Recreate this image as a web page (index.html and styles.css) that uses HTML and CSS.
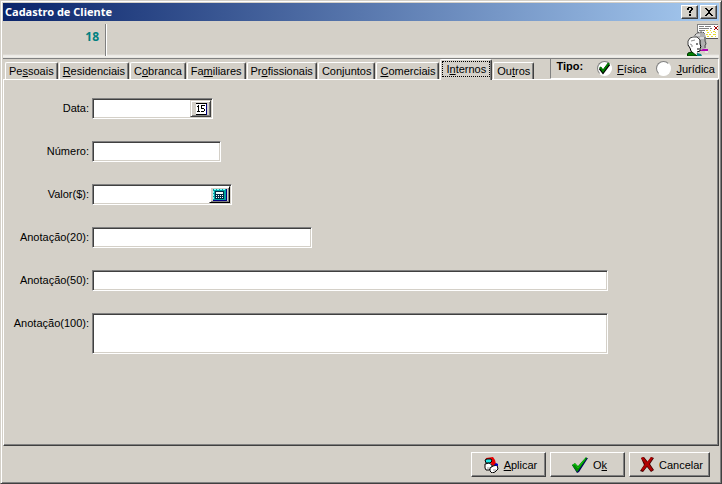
FILE: index.html
```html
<!DOCTYPE html>
<html lang="pt-BR">
<head>
    <meta charset="UTF-8">
    <title>Cadastro de Cliente</title>
    <link rel="stylesheet" href="styles.css">
</head>
<body>
    <form class="window">
        <div class="title-bar">
            <h1>Cadastro de Cliente</h1>
            <button type="button" class="title-btn" aria-label="Ajuda">
                <svg width="12" height="10" viewBox="0 0 12 10" shape-rendering="crispEdges"><path d="M3 1h1v-1h4v1h1v2h-1v1h-1v2h-2v-2h1v-1h1v-2h-2v2h-2zM5 7h2v2h-2z"/></svg>
            </button>
            <button type="button" class="title-btn" aria-label="Fechar">
                <svg width="12" height="10" viewBox="0 0 12 10" shape-rendering="crispEdges"><path d="M2 1h2v1h1v1h2v-1h1v-1h2v1h-1v1h-1v1h-1v2h1v1h1v1h1v1h-2v-1h-1v-1h-2v1h-1v1h-2v-1h1v-1h1v-1h1v-2h-1v-1h-1v-1h-1z"/></svg>
            </button>
        </div>
        <div class="header">
            <div class="code">18</div>
            <svg class="people" width="31" height="32" viewBox="0 0 31 32">
                <g shape-rendering="crispEdges">
                    <path d="M10 0h21v15h-21z" fill="#fff"/>
                    <path d="M10 0h21v1h-20v8h-1z" fill="#808080"/>
                    <path d="M19 14h12v1h-12z" fill="#555"/>
                    <path d="M12 2h5v1h-5zM18 2h6v1h-6zM12 4h10v1h-10zM23 4h2v1h-2zM12 6h6v1h-6z" fill="#808080"/>
                    <path d="M27 2h1v1h-1zM30 2h1v1h-1zM28 3h2v2h-2zM27 5h1v1h-1zM30 5h1v1h-1z" fill="#a00000"/>
                    <path d="M19 6h2v1h-2zM23 6h1v1h-1zM26 7h2v1h-2zM20 8h2v1h-2zM24 8h1v1h-1zM28 8h1v1h-1zM19 10h2v1h-2zM22 10h2v1h-2zM26 10h3v1h-3zM20 12h2v1h-2zM24 12h2v1h-2zM28 12h1v1h-1z" fill="#e8dc30"/>
                </g>
                <path d="M6 13l3-3 3-2h4l2 2 1 3v3l1 4-1 1v3l-4 2-4-4z" fill="#b0b0b0"/>
                <path d="M6 13l3-3 3-2h4l2 2" fill="none" stroke="#444" stroke-dasharray="2 1"/>
                <path d="M9 11h4M13 14h4" stroke="#fff"/>
                <path d="M18 13v4l1 3-1 1v3" fill="none" stroke="#555"/>
                <path d="M12 27l4-2h5v2z" fill="#b000b0"/>
                <path d="M18 28h3" stroke="#fff"/>
                <path d="M1 17l2-3 3-2 4 1 3 3v4l1 3-1 1v4l-3 1-4 2-2-5-3-4z" fill="#fff"/>
                <path d="M1 21v-4l2-3 3-1h4l3 3" fill="none" stroke="#444"/>
                <path d="M4 17l4-1M3 20l2 1v2" fill="none" stroke="#909090"/>
                <path d="M13 16v4l1 3-1 1v3l-3 1" fill="none" stroke="#000"/>
                <path d="M9 20h2M10 25h2" stroke="#000"/>
                <path d="M1 21l2 3 1 3 2 3" fill="none" stroke="#000"/>
                <path d="M0 32l1-3 4-1 5 4z" fill="#008000" stroke="#003000"/>
                <path d="M10 29l4 1 1 2h-5z" fill="#008080"/>
            </svg>
        </div>
        <div class="tab-row">
            <div class="tabs" role="tablist">
                <button type="button" role="tab">Pe<u>s</u>soais</button>
                <button type="button" role="tab"><u>R</u>esidenciais</button>
                <button type="button" role="tab">C<u>o</u>branca</button>
                <button type="button" role="tab">Fa<u>m</u>iliares</button>
                <button type="button" role="tab">Pr<u>o</u>fissionais</button>
                <button type="button" role="tab">Con<u>j</u>untos</button>
                <button type="button" role="tab"><u>C</u>omerciais</button>
                <button type="button" role="tab" class="active" aria-selected="true"><span>I<u>n</u>ternos</span></button>
                <button type="button" role="tab">Ou<u>t</u>ros</button>
            </div>
            <div class="type" role="radiogroup" aria-labelledby="tipo">
                <b id="tipo">Tipo:</b>
                <label>
                    <span class="radio">
                        <input type="radio" name="tipo" value="fisica" checked>
                        <svg width="15" height="15" viewBox="0 0 15 15"><path d="M3 7l3 4 6-8" fill="none" stroke="#000" stroke-width="3"/><path d="M3 6l3 4 6-8" fill="none" stroke="#008000" stroke-width="2"/></svg>
                    </span>
                    <span><u>F</u>ísica</span>
                </label>
                <label>
                    <span class="radio">
                        <input type="radio" name="tipo" value="juridica">
                        <svg width="15" height="15" viewBox="0 0 15 15"><path d="M3 7l3 4 6-8" fill="none" stroke="#000" stroke-width="3"/><path d="M3 6l3 4 6-8" fill="none" stroke="#008000" stroke-width="2"/></svg>
                    </span>
                    <span><u>J</u>urídica</span>
                </label>
            </div>
        </div>
        <div class="panel">
            <label for="data">Data:</label>
            <div class="field field-date">
                <input type="text" id="data">
                <button type="button" class="field-btn" aria-label="Abrir calendário">
                    <svg width="14" height="12" viewBox="0 0 14 12" shape-rendering="crispEdges">
                        <path d="M3 1h10v11h-10z" fill="#000080"/>
                        <path d="M2 1h10v10h-10z" fill="#fff"/>
                        <path d="M2 0h11v1h-11zM2 11h10v1h-10z" fill="#000"/>
                        <path d="M4 2h1v6h1v1h-3v-1h1v-4h-1v-1h1zM7 2h4v1h-3v2h2v1h1v2h-1v1h-3v-1h3v-2h-3z" fill="#000"/>
                    </svg>
                </button>
            </div>
            <label for="numero">Número:</label>
            <div class="field field-number"><input type="text" id="numero"></div>
            <label for="valor">Valor($):</label>
            <div class="field field-value">
                <input type="text" id="valor">
                <button type="button" class="field-btn calc" aria-label="Abrir calculadora">
                    <svg width="14" height="12" viewBox="0 0 14 12" shape-rendering="crispEdges">
                        <path d="M0 0h14v12h-14z" fill="#000080"/>
                        <path d="M0 0h13v11h-13z" fill="#00a0a0"/>
                        <path d="M1 0h2v1h-2zM4 0h2v1h-2zM7 0h2v1h-2zM10 0h2v1h-2zM0 2h1v2h-1zM0 5h1v2h-1zM0 8h1v2h-1z" fill="#80ffff"/>
                        <path d="M2 2h9v8h-9z" fill="#002840"/>
                        <path d="M3 3h7v2h-7z" fill="#f0ffff"/>
                        <path d="M3 6h1v1h-1zM5 6h1v1h-1zM7 6h1v1h-1zM9 6h1v1h-1zM3 8h1v1h-1zM5 8h1v1h-1zM7 8h1v1h-1zM9 8h1v1h-1z" fill="#fff"/>
                    </svg>
                </button>
            </div>
            <label for="nota20">Anotação(20):</label>
            <div class="field field-medium"><input type="text" id="nota20" maxlength="20"></div>
            <label for="nota50">Anotação(50):</label>
            <div class="field field-long"><input type="text" id="nota50" maxlength="50"></div>
            <label for="nota100">Anotação(100):</label>
            <div class="field field-long"><textarea id="nota100" maxlength="100"></textarea></div>
        </div>
        <div class="footer">
            <button type="button">
                <svg width="15" height="16" viewBox="0 0 15 16">
                    <path d="M2 1l7-1 2 3 1 4-3 2-3-4-5-1z" fill="#e80000"/>
                    <path d="M1 3l2-1h4l1 2-2 2h-4z" fill="#20e8e8" stroke="#000"/>
                    <path d="M1 7l4-1 3 2v3l-3 2h-3l-1-2z" fill="#fff" stroke="#000"/>
                    <path d="M6 11l3-2 4-1 1 4-3 3-3 1-2-2z" fill="#fff" stroke="#000"/>
                    <path d="M8 3l2 1 2 4h-5l1-1z" fill="#e80000"/>
                    <path d="M10 8l2-2 2 1v2z" fill="#0000c0"/>
                    <path d="M3 11h3M9 13h3" stroke="#999"/>
                </svg>
                <span><u>A</u>plicar</span>
            </button>
            <button type="submit">
                <svg width="16" height="16" viewBox="0 0 16 16">
                    <path d="M0 8l3-1 3 3 8-9 2 0-9 14-2 1z" fill="#000060"/>
                    <path d="M0 8l3-2 3 3 8-9 1 1-9 13-1 1z" fill="#008c00"/>
                    <path d="M1 8l2-1 3 4 7-9" fill="none" stroke="#10c810"/>
                </svg>
                <span>O<u>k</u></span>
            </button>
            <button type="button">
                <svg width="14" height="15" viewBox="0 0 14 15">
                    <path d="M1 1l3-1 4 5 3-5 3 1-4 6 4 6-3 2-4-5-4 5-3-1 4-6z" fill="#400000"/>
                    <path d="M1 1l2-1 4 5 4-5 2 1-4 6 4 6-2 1-4-5-4 5-2-1 4-6z" fill="#b00000"/>
                </svg>
                <span>Cancelar</span>
            </button>
        </div>
    </form>
</body>
</html>
```
FILE: styles.css
```css
*{
    box-sizing:border-box;
    padding:0;
    margin:0;
}
body{
    background:#d4d0c8;
    color:#000;
    font-family:"Liberation Sans", Arial, sans-serif;
    font-size:11px;
    line-height:14px;
}
button, input, textarea{
    font:inherit;
    color:inherit;
}
button{
    background:#d4d0c8;
}
svg{
    display:block;
    flex:none;
}
.window{
    display:flex;
    flex-direction:column;
    min-height:100vh;
    padding:2px;
    border:1px solid;
    border-color:#d4d0c8 #404040 #404040 #d4d0c8;
    box-shadow:inset 1px 1px #fff, inset -1px -1px #808080;
}
.title-bar{
    display:flex;
    align-items:center;
    gap:2px;
    height:18px;
    padding:0 2px;
    background:linear-gradient(to right, #0a246a, #a6caf0);
}
.title-bar h1{
    flex:1;
    color:#fff;
    font-family:"Noto Sans", sans-serif;
    font-size:11px;
    font-weight:bold;
}
.title-btn{
    display:flex;
    align-items:center;
    justify-content:center;
    width:17px;
    height:14px;
    border:1px solid;
    border-color:#fff #404040 #404040 #fff;
    box-shadow:inset -1px -1px #808080;
}
.header{
    display:flex;
    justify-content:space-between;
    height:38px;
    padding-top:3px;
    border-bottom:1px solid #808080;
    background:linear-gradient(#d4d0c8 33px, #f4f3f0 35px, #e4e2dc 37px);
}
.code{
    width:104px;
    height:32px;
    padding:6px 7px 0 0;
    border-right:1px solid #fff;
    box-shadow:inset -1px 0 #808080;
    color:#008080;
    font-family:"Noto Sans", sans-serif;
    font-size:12px;
    font-weight:bold;
    text-align:right;
}
.people{
    margin-right:1px;
}
.tab-row{
    display:flex;
    justify-content:space-between;
    height:20px;
}
.tabs{
    display:flex;
    align-items:flex-end;
    gap:1px;
    padding-left:2px;
}
.tabs button{
    height:17px;
    padding:0 3px;
    border:1px solid;
    border-color:#fff #404040 transparent #fff;
    border-bottom:0;
    border-radius:2px 2px 0 0;
    box-shadow:inset -1px 0 #808080;
}
.tabs .active{
    position:relative;
    height:21px;
    margin-bottom:-1px;
    padding:0 1px 2px;
}
.active span{
    display:block;
    padding:0 3px;
    border:1px dotted #000;
}
.type{
    display:flex;
    align-items:center;
    gap:10px;
    margin-top:-1px;
    padding:0 3px 0 5px;
    border:1px solid;
    border-color:#808080 #fff #fff #808080;
}
.type b{
    align-self:flex-start;
    margin-right:4px;
}
.type label{
    display:flex;
    align-items:center;
    gap:5px;
}
.radio{
    position:relative;
}
.radio input{
    display:block;
    width:15px;
    height:15px;
    border:1px solid;
    border-color:#808080 #fff #fff #808080;
    border-radius:50%;
    background:#fff;
    appearance:none;
}
.radio svg{
    display:none;
    position:absolute;
    top:0;
    left:0;
    pointer-events:none;
}
.radio input:checked + svg{
    display:block;
}
.panel{
    flex:1;
    display:grid;
    grid-template-columns:85px 1fr;
    align-content:start;
    gap:22px 3px;
    padding:18px 12px 18px 0;
    border:1px solid;
    border-color:#fff #404040 #404040 #fff;
    box-shadow:inset -1px -1px #808080;
}
.panel label{
    padding-top:3px;
    text-align:right;
}
.field{
    display:flex;
    max-width:100%;
    min-height:21px;
    padding:1px;
    border:1px solid;
    border-color:#808080 #fff #fff #808080;
    background:#fff;
    box-shadow:inset 1px 1px #404040, inset -1px -1px #d4d0c8;
}
.field-date{
    width:121px;
}
.field-number{
    width:129px;
}
.field-value{
    width:140px;
}
.field-medium{
    width:220px;
}
.field-long{
    width:516px;
}
.field input, .field textarea{
    flex:1;
    min-width:0;
    padding:0 2px;
    border:0;
    outline:0;
    background:transparent;
    resize:none;
}
.field textarea{
    height:37px;
}
.field-btn{
    display:flex;
    align-items:center;
    justify-content:center;
    width:21px;
    border:1px solid;
    border-color:#d4d0c8 #404040 #404040 #d4d0c8;
    box-shadow:inset 1px 1px #fff, inset -1px -1px #808080;
}
.calc{
    border-color:#fff #000 #000 #fff;
}
.footer{
    display:flex;
    justify-content:flex-end;
    gap:4px;
    padding:6px 9px 4px;
}
.footer button{
    display:flex;
    align-items:center;
    justify-content:center;
    gap:5px;
    min-width:75px;
    height:25px;
    padding:0 6px 0 10px;
    border:1px solid;
    border-color:#fff #404040 #404040 #fff;
    box-shadow:inset -1px -1px #808080;
}
```
